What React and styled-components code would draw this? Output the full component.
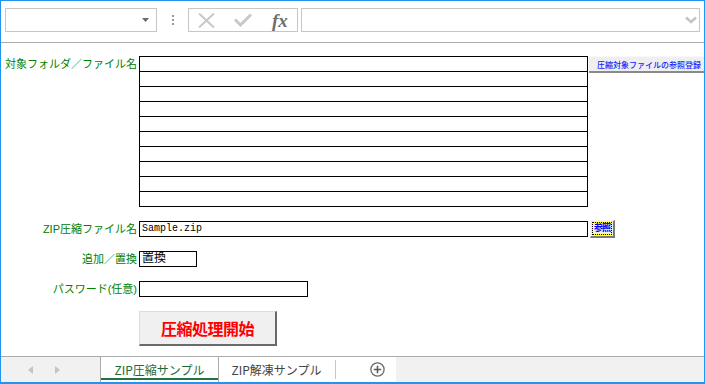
import React from 'react'
import styled, { createGlobalStyle } from 'styled-components'

const GlobalStyle = createGlobalStyle`
  html, body { margin: 0; padding: 0; background: #fff; }
  * { box-sizing: border-box; }
`;

const Window = styled.div`
  width: 705px;
  height: 384px;
  border: 1px solid #1e95f2;
  border-bottom-width: 2px;
  display: flex;
  flex-direction: column;
  overflow: hidden;
  background: #fff;
  font-family: "Liberation Sans", "Noto Sans CJK JP", sans-serif;
`;

const FormulaBar = styled.div`
  height: 42px;
  flex: none;
  display: flex;
  align-items: flex-start;
  padding: 7px 4px 0 4px;
  border-bottom: 1px solid #ababab;
`;

const Box = styled.div`
  height: 24px;
  border: 1px solid #c6c6c6;
  display: flex;
  align-items: center;
  position: relative;
`;

const NameBox = styled(Box)`
  width: 152px;
  justify-content: flex-end;
  padding-right: 6px;
`;

const Grip = styled.div`
  width: 31px;
  height: 24px;
  display: flex;
  flex-direction: column;
  align-items: center;
  justify-content: center;
  gap: 2px;
  span {
    width: 2px;
    height: 2px;
    background: #9a9a9a;
  }
`;

const FxBox = styled(Box)`
  width: 110px;
  padding-left: 9px;
  gap: 19px;
`;

const FxText = styled.span`
  font-family: "Liberation Serif", "DejaVu Serif", serif;
  font-style: italic;
  font-weight: bold;
  font-size: 19px;
  color: #6e6e6e;
  margin-left: 1px;
  line-height: 1;
`;

const FormulaInput = styled(Box)`
  flex: 1;
  margin-left: 3px;
  justify-content: flex-end;
  padding-right: 2px;
`;

const Sheet = styled.div`
  height: 313px;
  flex: none;
  padding-top: 13px;
  display: flex;
  flex-direction: column;
  overflow: hidden;
`;

const Row = styled.div`
  display: flex;
  align-items: ${p => (p.$top ? 'flex-start' : 'center')};
  height: ${p => p.$h}px;
  margin-top: ${p => p.$mt || 0}px;
  flex: none;
`;

const Label = styled.div`
  width: 138px;
  flex: none;
  text-align: right;
  padding-right: 2px;
  font-size: 11px;
  line-height: 14px;
  color: #008000;
  white-space: nowrap;
  margin-top: ${p => (p.$top ? 1 : 0)}px;
`;

const ListBox = styled.div`
  width: 449px;
  flex: none;
  border: 1px solid #000;
  border-bottom: none;
`;

const ListRow = styled.div`
  height: 15px;
  border-bottom: 1px solid #000;
`;

const TextInput = styled.div`
  width: ${p => p.$w}px;
  height: 16px;
  flex: none;
  border: 1px solid #000;
  padding-left: 2px;
  display: flex;
  align-items: center;
  font-family: "Liberation Mono", "Noto Sans CJK JP", monospace;
  font-size: ${p => (p.$cjk ? 12 : 10)}px;
  line-height: 14px;
  color: #000;
  white-space: nowrap;
`;

const SmallButton = styled.div`
  height: 17px;
  flex: none;
  margin-left: 1px;
  background: #efefef;
  border-top: 1px solid #f8f8f8;
  border-bottom: 2px solid #8a8a8a;
  padding: 0 6px 0 8px;
  display: flex;
  align-items: center;
  font-size: 8px;
  font-weight: 500;
  color: #2020ff;
  white-space: nowrap;
`;

const RefButton = styled.div`
  width: 25px;
  height: 18px;
  margin-left: 2px;
  flex: none;
  background: #ececec;
  border-top: 1px solid #f4f4f4;
  border-left: 1px solid #f4f4f4;
  border-right: 2px solid #7a7a7a;
  border-bottom: 2px solid #7a7a7a;
  display: flex;
  align-items: center;
  justify-content: center;
`;

const FocusRing = styled.span`
  width: 20px;
  height: 13px;
  border: 1px dotted #000;
  background: linear-gradient(#eeeeee, #eeeeee) padding-box, #ffff00;
  display: flex;
  align-items: center;
  justify-content: center;
  font-size: 9px;
  font-weight: bold;
  color: #0000ee;
  line-height: 1;
  letter-spacing: -1px;
`;

const StartButton = styled.div`
  width: 138px;
  height: 35px;
  margin-left: 138px;
  flex: none;
  background: #f0f0f0;
  border-top: 1px solid #dcdcdc;
  border-left: 1px solid #dcdcdc;
  border-right: 2px solid #6a6a6a;
  border-bottom: 2px solid #6a6a6a;
  display: flex;
  align-items: center;
  justify-content: center;
  font-family: "Noto Sans CJK JP", sans-serif;
  font-size: 16px;
  font-weight: bold;
  color: #ff0000;
  letter-spacing: -0.5px;
`;

const TabBar = styled.div`
  height: 26px;
  flex: none;
  border-top: 1px solid #ababab;
  display: flex;
  background: #f1f1f1;
`;

const TabNav = styled.div`
  width: 99px;
  flex: none;
  display: flex;
  align-items: center;
  padding-left: 27px;
  gap: 22px;
`;

const TabStrip = styled.div`
  display: flex;
  background: #fff;
  width: 296px;
  flex: none;
`;

const Tab = styled.div`
  width: ${p => p.$w}px;
  flex: none;
  display: flex;
  align-items: center;
  justify-content: center;
  position: relative;
  font-family: "Noto Sans CJK JP", sans-serif;
  font-size: 12px;
  color: ${p => (p.$active ? '#1e6b3a' : '#444')};
  border-left: ${p => (p.$active ? '1px solid #ababab' : 'none')};
  border-right: 1px solid ${p => (p.$active ? '#ababab' : '#fff')};
  padding-bottom: 1px;
  &::after {
    content: '';
    display: ${p => (p.$active ? 'block' : 'none')};
    position: absolute;
    left: 0;
    right: 0;
    bottom: 2px;
    height: 2px;
    background: #217346;
  }
`;

const TabDivider = styled.div`
  width: 1px;
  height: 19px;
  align-self: center;
  background: #c6c6c6;
  flex: none;
`;

const AddTab = styled.div`
  flex: 1;
  display: flex;
  align-items: center;
  padding-left: 34px;
`;

const rows = Array.from({ length: 10 })

export default function App() {
  return (
    <>
      <GlobalStyle />
      <Window>
        <FormulaBar>
          <NameBox>
            <svg width="8" height="5" viewBox="0 0 8 5"><path d="M0 0h7L3.5 4z" fill="#6b6b6b" /></svg>
          </NameBox>
          <Grip><span /><span /><span /></Grip>
          <FxBox>
            <svg width="17" height="15" viewBox="0 0 17 15">
              <path d="M1 0.5L16 14.5M16 0.5L1 14.5" stroke="#c8c8c8" strokeWidth="2" fill="none" />
            </svg>
            <svg width="18" height="14" viewBox="0 0 18 14">
              <path d="M1 6.5L6.5 12L17 1.5" stroke="#c8c8c8" strokeWidth="3" fill="none" />
            </svg>
            <FxText>fx</FxText>
          </FxBox>
          <FormulaInput>
            <svg width="12" height="8" viewBox="0 0 12 8">
              <path d="M1 1.5L6 6L11 1.5" stroke="#c4c4c4" strokeWidth="2.6" fill="none" />
            </svg>
          </FormulaInput>
        </FormulaBar>

        <Sheet>
          <Row $h={151} $top>
            <Label $top>対象フォルダ／ファイル名</Label>
            <ListBox>
              {rows.map((_, i) => <ListRow key={i} />)}
            </ListBox>
            <SmallButton>圧縮対象ファイルの参照登録</SmallButton>
          </Row>
          <Row $h={18} $mt={13}>
            <Label>ZIP圧縮ファイル名</Label>
            <TextInput $w={449}>Sample.zip</TextInput>
            <RefButton><FocusRing>参照</FocusRing></RefButton>
          </Row>
          <Row $h={16} $mt={13}>
            <Label>追加／置換</Label>
            <TextInput $w={58} $cjk>置換</TextInput>
          </Row>
          <Row $h={16} $mt={14}>
            <Label>パスワード(任意)</Label>
            <TextInput $w={169} />
          </Row>
          <Row $h={35} $mt={14}>
            <StartButton>圧縮処理開始</StartButton>
          </Row>
        </Sheet>

        <TabBar>
          <TabNav>
            <svg width="5" height="8" viewBox="0 0 5 8"><path d="M5 0v8L0 4z" fill="#c4c4c4" /></svg>
            <svg width="5" height="8" viewBox="0 0 5 8"><path d="M0 0v8L5 4z" fill="#c4c4c4" /></svg>
          </TabNav>
          <TabStrip>
            <Tab $w={119} $active>ZIP圧縮サンプル</Tab>
            <Tab $w={116}>ZIP解凍サンプル</Tab>
            <TabDivider />
            <AddTab>
              <svg width="15" height="15" viewBox="0 0 15 15">
                <circle cx="7.5" cy="7.5" r="6.6" stroke="#6a6a6a" strokeWidth="1.3" fill="none" />
                <path d="M7.5 3.8v7.4M3.8 7.5h7.4" stroke="#5a5a5a" strokeWidth="1.6" />
              </svg>
            </AddTab>
          </TabStrip>
        </TabBar>
      </Window>
    </>
  )
}
